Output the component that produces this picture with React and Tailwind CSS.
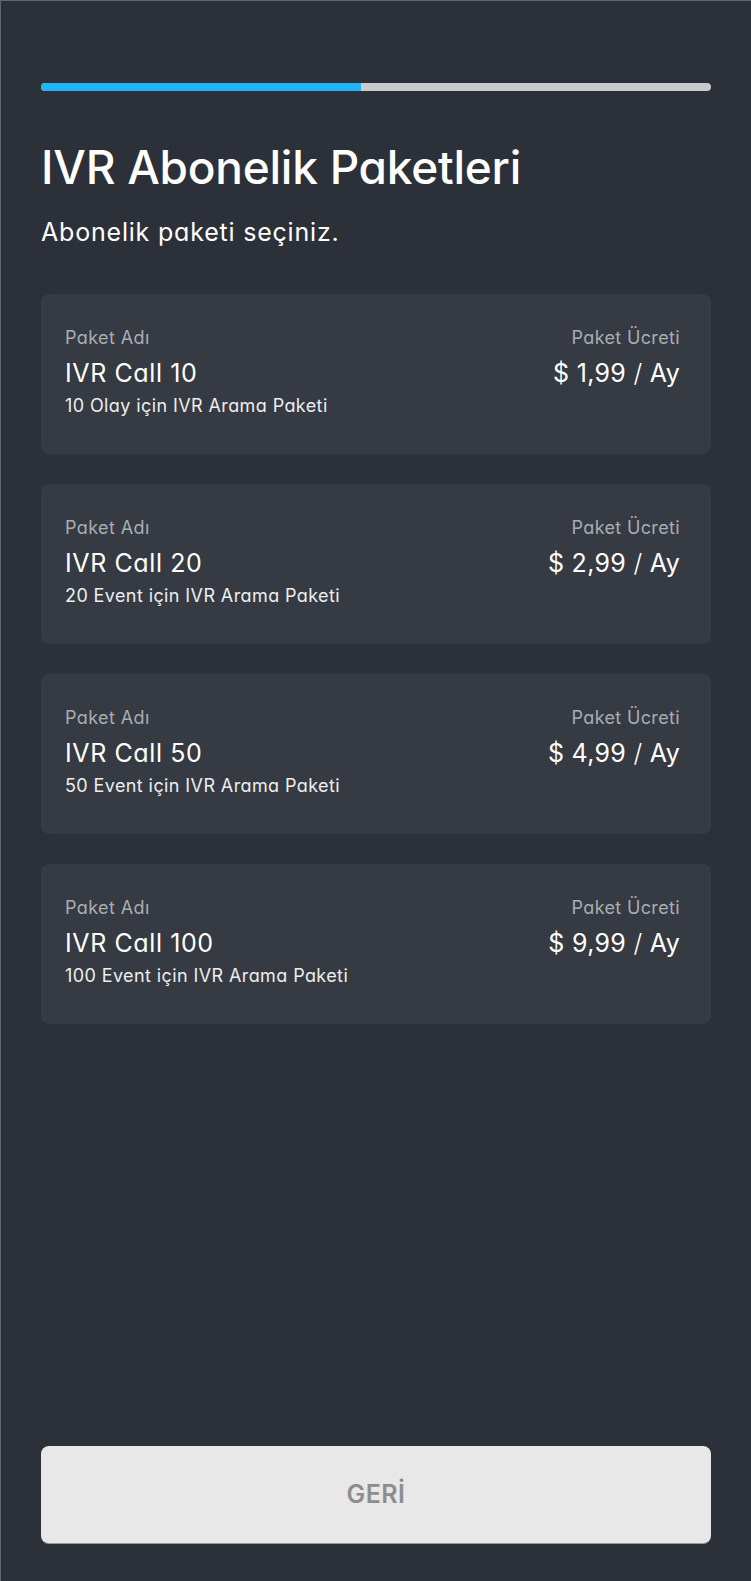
import React from "react";

const packages = [
  { name: "IVR Call 10", desc: "10 Olay için IVR Arama Paketi", price: "$ 1,99" },
  { name: "IVR Call 20", desc: "20 Event için IVR Arama Paketi", price: "$ 2,99" },
  { name: "IVR Call 50", desc: "50 Event için IVR Arama Paketi", price: "$ 4,99" },
  { name: "IVR Call 100", desc: "100 Event için IVR Arama Paketi", price: "$ 9,99" },
];

function Card({ p }) {
  return (
    <div className="h-[160px] rounded-lg bg-[#363a42] pl-6 pr-[31px] pt-8 flex justify-between">
      <div className="flex flex-col">
        <div className="text-[18px] leading-6 tracking-[0.4px] text-[#a9adb3]">Paket Adı</div>
        <div className="mt-[7px] text-[25px] leading-8 tracking-[0.6px] text-white">{p.name}</div>
        <div className="mt-[5px] text-[18px] leading-6 tracking-[0.4px] text-[#eceef0]">{p.desc}</div>
      </div>
      <div className="flex flex-col items-end">
        <div className="text-[18px] leading-6 tracking-[0.35px] text-[#a9adb3]">Paket Ücreti</div>
        <div className="mt-[7px] text-[25px] leading-8 tracking-[0.3px] text-white">
          {p.price} <span className="font-light">/</span> Ay
        </div>
      </div>
    </div>
  );
}

export default function App() {
  return (
    <div className="min-h-[1581px] bg-[#2c3038] border-t border-l border-[#62656b] flex flex-col px-10 font-['Inter','Noto_Sans',sans-serif] [font-feature-settings:'cv11'] antialiased">
      <div className="pt-[82px]">
        <div className="h-2 w-full rounded-full bg-[#c9cacc] flex overflow-hidden">
          <div className="h-2 w-[320px] bg-[#20b7f7] rounded-l-full" />
        </div>
      </div>
      <h1 className="mt-12 text-[46px] leading-[56px] font-medium text-white tracking-[-0.25px]">
        IVR Abonelik Paketleri
      </h1>
      <p className="mt-[21px] text-[25px] leading-8 tracking-[0.8px] text-white">Abonelik paketi seçiniz.</p>
      <div className="mt-[46px] flex flex-col gap-[30px]">
        {packages.map((p) => (
          <Card key={p.name} p={p} />
        ))}
      </div>
      <div className="flex-1" />
      <button className="mb-[37px] h-[98px] w-full rounded-lg bg-[#e8e8e8] border-b border-[#9a9a9a] text-[25px] font-semibold tracking-[0.5px] text-[#8d8d8d]">
        GERİ
      </button>
    </div>
  );
}
